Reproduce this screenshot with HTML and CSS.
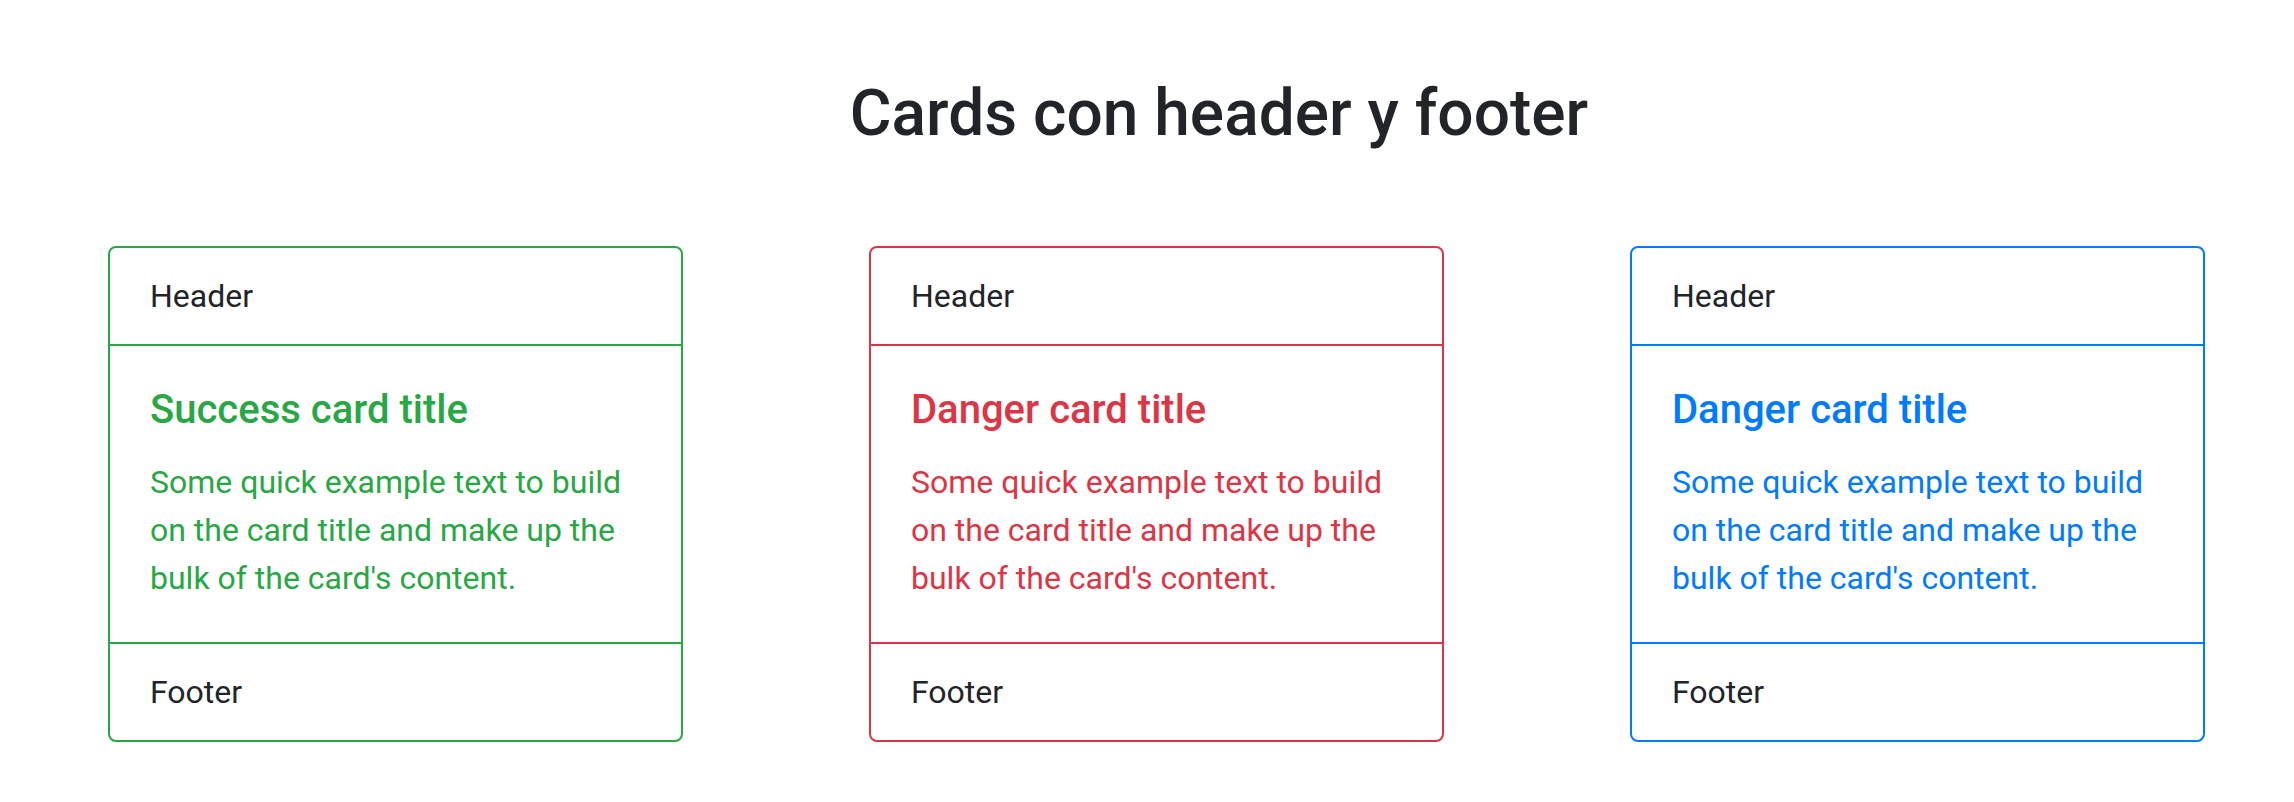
FILE: index.html
```html
<!DOCTYPE html>
<html lang="es">
<head>
<meta charset="utf-8">
<title>Cards con header y footer</title>
<link rel="stylesheet" href="styles.css">
</head>
<body>
<main class="page">
  <h2 class="page-title">Cards con header y footer</h2>
  <div class="card-row">
    <div class="card card-success">
      <div class="card-header">Header</div>
      <div class="card-body">
        <h5 class="card-title">Success card title</h5>
        <p class="card-text">Some quick example text to build on the card title and make up the bulk of the card's content.</p>
      </div>
      <div class="card-footer">Footer</div>
    </div>
    <div class="card card-danger">
      <div class="card-header">Header</div>
      <div class="card-body">
        <h5 class="card-title">Danger card title</h5>
        <p class="card-text">Some quick example text to build on the card title and make up the bulk of the card's content.</p>
      </div>
      <div class="card-footer">Footer</div>
    </div>
    <div class="card card-primary">
      <div class="card-header">Header</div>
      <div class="card-body">
        <h5 class="card-title">Danger card title</h5>
        <p class="card-text">Some quick example text to build on the card title and make up the bulk of the card's content.</p>
      </div>
      <div class="card-footer">Footer</div>
    </div>
  </div>
</main>
</body>
</html>
```

FILE: styles.css
```css
html, body {
  margin: 0;
  padding: 0;
  background: #ffffff;
}

body {
  font-family: "Roboto", "Liberation Sans", sans-serif;
  font-size: 32px;
  line-height: 1.5;
  color: #212529;
}

.page {
  padding-top: 76px;
}

.page-title {
  margin: 0 0 93px 0;
  padding-left: 144px;
  text-align: center;
  font-size: 64px;
  font-weight: 500;
  line-height: 1.2;
  color: #212529;
}

.card-row {
  display: flex;
  gap: 186px;
  padding-left: 108px;
}

.card {
  --accent: #28a745;
  width: 575px;
  box-sizing: border-box;
  border: 2px solid var(--accent);
  border-radius: 8px;
  display: flex;
  flex-direction: column;
}

.card-success { --accent: #28a745; }
.card-danger { --accent: #dc3545; }
.card-primary { --accent: #007bff; }

.card-header,
.card-footer {
  padding: 24px 40px;
  font-size: 32px;
  line-height: 48px;
  color: #212529;
}

.card-header {
  border-bottom: 2px solid var(--accent);
}

.card-footer {
  border-top: 2px solid var(--accent);
}

.card-body {
  padding: 40px;
  color: var(--accent);
}

.card-title {
  margin: 0 0 24px 0;
  font-size: 40px;
  font-weight: 500;
  line-height: 1.2;
}

.card-text {
  margin: 0;
  font-size: 32px;
  line-height: 48px;
}
```
